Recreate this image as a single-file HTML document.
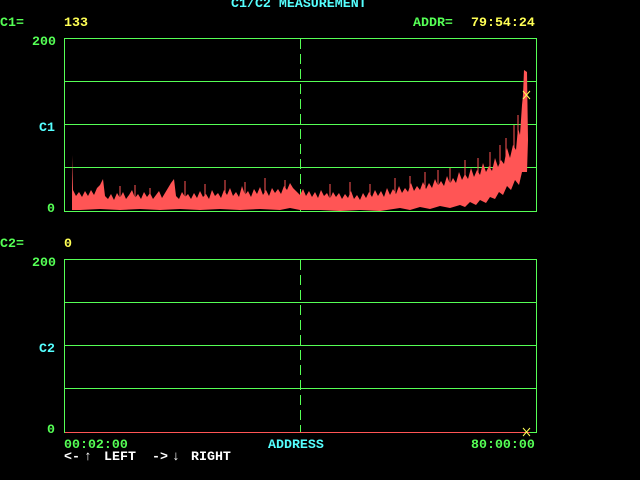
<!DOCTYPE html><html><head><style>
body{margin:0;background:#000;width:640px;height:480px;overflow:hidden;position:relative;font-family:"Liberation Mono",monospace;font-weight:bold;font-size:13.3px}
.t{position:absolute;line-height:12px;white-space:pre}
.g{color:#55ff55}.c{color:#55ffff}.y{color:#ffff55}.w{color:#fff}
svg{position:absolute;left:0;top:0}
</style></head><body>
<svg width="640" height="480">
<g stroke="#55ff55" fill="none" stroke-width="1">
<rect x="64.5" y="38.5" width="472" height="173"/>
<line x1="65" y1="81.5" x2="536" y2="81.5"/><line x1="65" y1="124.5" x2="536" y2="124.5"/><line x1="65" y1="167.5" x2="536" y2="167.5"/>
<line x1="300.5" y1="39" x2="300.5" y2="211" stroke-dasharray="10,5"/>
<rect x="64.5" y="259.5" width="472" height="173"/>
<line x1="65" y1="302.5" x2="536" y2="302.5"/><line x1="65" y1="345.5" x2="536" y2="345.5"/><line x1="65" y1="388.5" x2="536" y2="388.5"/>
<line x1="300.5" y1="260" x2="300.5" y2="432" stroke-dasharray="10,5"/>
</g>
<polygon fill="#ff5555" points="72,155 73,190 76,196 79,192 82,197 85,191 88,196 91,190 94,195 97,188 100,185 103,179 105,196 108,199 111,194 114,200 117,193 120,198 123,192 126,199 129,195 132,190 135,198 138,194 141,199 144,192 147,197 150,193 153,199 156,195 159,191 162,198 165,193 168,188 171,183 174,179 176,196 179,199 182,192 185,197 188,194 191,199 194,193 197,198 200,191 203,197 206,194 209,199 212,190 215,196 218,193 221,198 224,190 227,195 230,188 233,196 236,192 239,197 242,186 245,195 248,191 251,197 254,189 257,194 260,187 263,195 266,190 269,196 272,188 275,193 278,189 281,194 284,186 287,190 290,183 293,188 296,191 300,195 303,189 306,196 309,191 312,197 315,192 318,198 321,190 324,196 327,193 330,199 333,192 336,197 339,193 342,199 345,194 348,198 351,191 354,199 357,195 360,200 363,193 366,198 369,192 372,197 375,190 378,196 381,191 384,197 387,188 390,195 393,189 396,194 399,186 402,193 405,188 408,192 411,183 414,191 417,186 420,190 423,182 426,189 429,183 432,188 435,179 438,186 441,181 444,186 447,176 450,184 453,178 456,183 459,172 462,180 465,174 468,179 471,168 474,177 477,170 480,175 483,163 486,172 489,166 492,171 495,158 498,167 501,160 504,164 507,148 510,158 513,145 516,150 518,128 520,135 522,105 523,95 524,70 527,72 528,140 527,172 522,172 519,185 515,180 511,190 507,186 503,195 499,192 495,199 490,197 486,203 480,200 476,205 470,202 465,207 460,205 450,208 440,206 430,209 420,207 410,210 400,208 380,211 360,210 340,211 320,210 300,210 290,208 280,210 260,209 240,210 220,209 200,210 180,209 160,210 140,209 120,210 100,209 80,210 72,210"/>
<g stroke="#ff5555" stroke-width="1">
<path d="M120 186V200M135 185V200M150 188V200M185 181V200M205 184V200M225 180V200M245 182V200M265 178V200M285 180V200M330 184V200M350 182V200M370 184V200M395 178V200M410 176V200M425 172V200M438 170V200M450 168V195M465 160V190M478 158V190M490 152V185M500 145V180M506 138V175M514 125V170M518 115V160M526 100V150"/>
</g>
<line x1="65" y1="432.5" x2="530" y2="432.5" stroke="#ff5555"/>
<g stroke="#ffff55"><path d="M523 91l7 8M530 91l-7 8M523 428l7 8M530 428l-7 8"/></g>
</svg>
<div class="t c" style="left:231px;top:-2px">C1/C2 MEASUREMENT</div>
<div class="t g" style="left:0;top:17px">C1=</div>
<div class="t y" style="left:64px;top:17px">133</div>
<div class="t g" style="left:413px;top:17px">ADDR=</div>
<div class="t y" style="left:471px;top:17px">79:54:24</div>
<div class="t g" style="left:32px;top:36px">200</div>
<div class="t c" style="left:39px;top:122px">C1</div>
<div class="t g" style="left:47px;top:203px">0</div>
<div class="t g" style="left:0;top:238px">C2=</div>
<div class="t y" style="left:64px;top:238px">0</div>
<div class="t g" style="left:32px;top:257px">200</div>
<div class="t c" style="left:39px;top:343px">C2</div>
<div class="t g" style="left:47px;top:424px">0</div>
<div class="t g" style="left:64px;top:439px">00:02:00</div>
<div class="t c" style="left:268px;top:439px">ADDRESS</div>
<div class="t g" style="left:471px;top:439px">80:00:00</div>
<div class="t w" style="left:64px;top:451px">&lt;-</div>
<div class="t w" style="left:84px;top:451px">↑</div>
<div class="t w" style="left:104px;top:451px">LEFT</div>
<div class="t w" style="left:152px;top:451px">-&gt;</div>
<div class="t w" style="left:172px;top:451px">↓</div>
<div class="t w" style="left:191px;top:451px">RIGHT</div>
</body></html>
